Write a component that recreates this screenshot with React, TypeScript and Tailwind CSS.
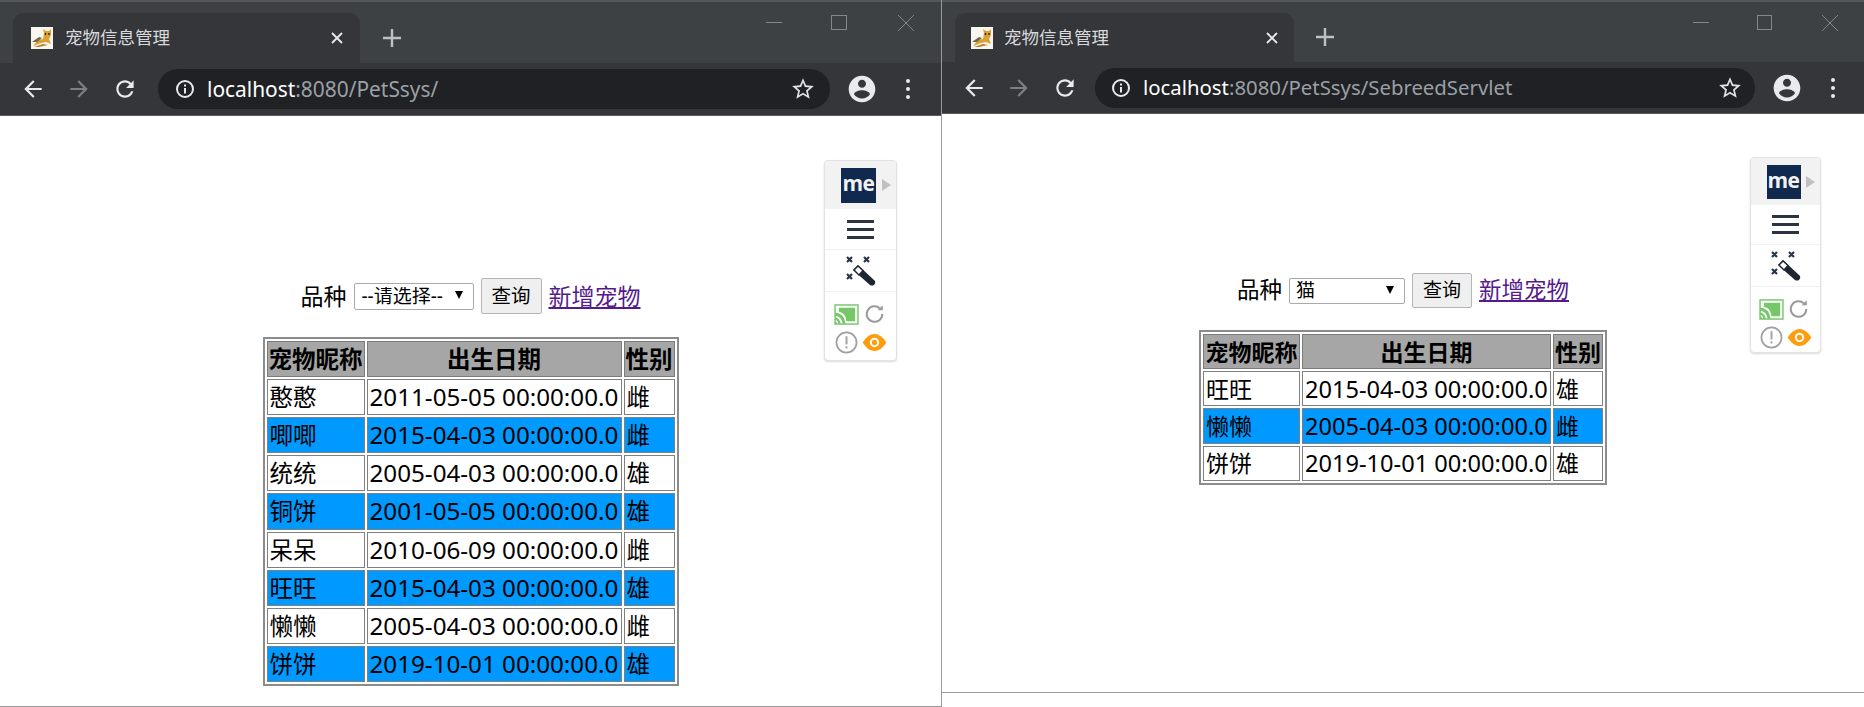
const font = 'font-["Noto_Sans","Noto_Sans_CJK_SC",sans-serif]';

const leftPets = [
  ['憨憨', '2011-05-05 00:00:00.0', '雌'],
  ['唧唧', '2015-04-03 00:00:00.0', '雌'],
  ['统统', '2005-04-03 00:00:00.0', '雄'],
  ['铜饼', '2001-05-05 00:00:00.0', '雄'],
  ['呆呆', '2010-06-09 00:00:00.0', '雌'],
  ['旺旺', '2015-04-03 00:00:00.0', '雄'],
  ['懒懒', '2005-04-03 00:00:00.0', '雌'],
  ['饼饼', '2019-10-01 00:00:00.0', '雄'],
];

const rightPets = [
  ['旺旺', '2015-04-03 00:00:00.0', '雄'],
  ['懒懒', '2005-04-03 00:00:00.0', '雌'],
  ['饼饼', '2019-10-01 00:00:00.0', '雄'],
];

function TomcatIcon() {
  return (
    <svg viewBox="0 0 22 22" className="w-[22px] h-[22px] shrink-0 bg-[#f8f6ee]">
      <path d="M2 19 L7 13 L12 12 L13 6 L12 2 L15 4 L18 4 L20 2 L20 8 L18 12 L20 17 L15 15 L10 16 L5 18 Z" fill="#e0a030" />
      <path d="M1 15 L8 10 L11 11 L6 15 Z" fill="#6b6a55" />
      <path d="M3 20 L12 17 L17 18 L8 20 Z" fill="#b5802a" />
      <circle cx="14.5" cy="7" r="0.9" fill="#222" />
      <circle cx="18" cy="7" r="0.9" fill="#222" />
    </svg>
  );
}

function Glyph({ d, className }: { d: string; className: string }) {
  return (
    <svg viewBox="0 0 24 24" fill="currentColor" className={className}>
      <path d={d} />
    </svg>
  );
}

const backPath = 'M20 11H7.83l5.59-5.59L12 4l-8 8 8 8 1.41-1.41L7.83 13H20v-2z';
const forwardPath = 'M4 11h12.17l-5.59-5.59L12 4l8 8-8 8-1.41-1.41L16.17 13H4v-2z';
const reloadPath =
  'M17.65 6.35C16.2 4.9 14.21 4 12 4c-4.42 0-7.99 3.58-7.99 8s3.57 8 7.99 8c3.73 0 6.84-2.55 7.73-6h-2.08c-.82 2.33-3.04 4-5.65 4-3.31 0-6-2.69-6-6s2.69-6 6-6c1.66 0 3.14.69 4.22 1.78L13 11h7V4l-2.35 2.35z';
const starPath =
  'M22 9.24l-7.19-.62L12 2 9.19 8.63 2 9.24l5.46 4.73L5.82 21 12 17.27 18.18 21l-1.63-7.03L22 9.24zM12 15.4l-3.76 2.27 1-4.28-3.32-2.88 4.38-.38L12 6.1l1.71 4.04 4.38.38-3.32 2.88 1 4.28L12 15.4z';
const avatarPath =
  'M12 2C6.48 2 2 6.48 2 12s4.48 10 10 10 10-4.48 10-10S17.52 2 12 2zm0 3c1.66 0 3 1.34 3 3s-1.34 3-3 3-3-1.34-3-3 1.34-3 3-3zm0 14.2c-2.5 0-4.71-1.28-6-3.22.03-1.99 4-3.08 6-3.08 1.99 0 5.97 1.09 6 3.08-1.29 1.94-3.5 3.22-6 3.22z';

function InfoIcon() {
  return (
    <svg viewBox="0 0 20 20" className="w-[20px] h-[20px] shrink-0 text-[#e8eaed]" fill="none" stroke="currentColor">
      <circle cx="10" cy="10" r="8" strokeWidth="2" />
      <rect x="9" y="9" width="2" height="5.5" fill="currentColor" stroke="none" />
      <rect x="9" y="5.5" width="2" height="2" fill="currentColor" stroke="none" />
    </svg>
  );
}

function Wand() {
  return (
    <svg viewBox="0 0 32 32" className="w-[32px] h-[32px]">
      <path d="M8 15 L13 10 L30 26 Q31 28 29 30 Q27 31 25 30 Z" fill="#1c2530" />
      <path d="M9 15 L13 11 L18 15.5 L14 20 Z" fill="#ffffff" stroke="#1c2530" strokeWidth="1.4" />
      <path d="M2 2 L7 7 M7 2 L2 7 M19 2 L24 7 M24 2 L19 7 M2 19 L7 24 M7 19 L2 24" stroke="#26364a" strokeWidth="2.2" />
    </svg>
  );
}

function CastIcon() {
  return (
    <svg viewBox="0 0 26 22" className="w-[25px] h-[21px]">
      <rect x="1" y="1" width="24" height="20" fill="#ffffff" stroke="#7ccb72" strokeWidth="1.6" />
      <path d="M5 4 H22 V18 H13 Q12 9 5 8 Z" fill="#74c868" />
      <path d="M1 9 Q11 10 12 21 H9 Q8 13 1 12 Z M1 14 Q6 15 7 21 H4.5 Q4 17 1 16.5 Z M1 18 Q3 18.5 3.5 21 H1 Z" fill="#74c868" />
    </svg>
  );
}

function ReloadSmall() {
  return (
    <svg viewBox="0 0 24 24" className="w-[22px] h-[22px]" fill="none" stroke="#9a9a9a" strokeWidth="2.2">
      <path d="M20 12a8.5 8.5 0 1 1-2.6-6.1" />
      <path d="M20.5 2.5 V8 H15 Z" fill="#9a9a9a" stroke="none" />
    </svg>
  );
}

function AlertIcon() {
  return (
    <svg viewBox="0 0 24 24" className="w-[23px] h-[23px]">
      <circle cx="12" cy="12" r="10.5" fill="none" stroke="#a0a0a0" strokeWidth="1.8" />
      <rect x="11" y="5.5" width="2" height="8.5" fill="#a0a0a0" />
      <rect x="11" y="16" width="2" height="2.2" fill="#a0a0a0" />
    </svg>
  );
}

function EyeIcon() {
  return (
    <svg viewBox="0 0 26 18" className="w-[25px] h-[17px]">
      <path d="M0.5 9 Q6 0 13 0 Q20 0 25.5 9 Q20 18 13 18 Q6 18 0.5 9 Z" fill="#ff9c0a" />
      <circle cx="13" cy="9" r="5" fill="#ffffff" />
      <circle cx="13" cy="9" r="2.8" fill="#ff9c0a" />
    </svg>
  );
}

function ExtensionPanel({ className, topClass, menuClass, wandClass, logoClass }: { className: string; topClass: string; menuClass: string; wandClass: string; logoClass: string }) {
  return (
    <div className={`absolute flex flex-col bg-white rounded-[4px] border border-[#e2e2e2] shadow-[0_1px_2px_rgba(0,0,0,0.15)] overflow-hidden ${className}`}>
      <div className={`relative flex items-center justify-center bg-[#f2f2f2] pr-[4px] ${topClass}`}>
        <div className={`flex items-center justify-center bg-[#0f2a4e] text-[#f2f2f2] font-bold text-[21px] tracking-[-0.5px] leading-none pb-[3px] font-["Open_Sans",sans-serif] ${logoClass}`}>
          me
        </div>
        <div className="absolute right-[5px] top-[18px] w-0 h-0 border-y-[6px] border-y-transparent border-l-[9px] border-l-[#c0c0c0]" />
      </div>
      <div className={`flex flex-col items-center justify-center gap-[5px] border-b border-[#f0f0f0] ${menuClass}`}>
        <div className="w-[27px] h-[3px] bg-[#2b3440]" />
        <div className="w-[27px] h-[3px] bg-[#2b3440]" />
        <div className="w-[27px] h-[3px] bg-[#2b3440]" />
      </div>
      <div className={`flex items-center justify-center border-b border-[#f0f0f0] ${wandClass}`}>
        <Wand />
      </div>
      <div className="grid grid-cols-2 justify-items-center items-center gap-y-[6px] px-[7px] pt-[11px]">
        <CastIcon />
        <ReloadSmall />
        <AlertIcon />
        <EyeIcon />
      </div>
    </div>
  );
}

function PetTable({ pets, tableClass, cellClass, textClass, dateClass, col1, col2, col3 }: { pets: string[][]; tableClass: string; cellClass: string; textClass: string; dateClass: string; col1: string; col2: string; col3: string }) {
  const th = `border border-[#7b7b7b] bg-[#a6a6a6] text-black font-bold text-center p-0 ${cellClass} ${textClass}`;
  return (
    <table className={`mx-auto table-fixed border-separate border-spacing-[2px] border-2 border-[#8c8c8c] ${tableClass}`}>
      <thead>
        <tr>
          <th className={`${th} ${col1}`}>宠物昵称</th>
          <th className={`${th} ${col2}`}>出生日期</th>
          <th className={`${th} ${col3}`}>性别</th>
        </tr>
      </thead>
      <tbody>
        {pets.map((pet, i) => (
          <tr key={pet[0]}>
            {pet.map((text, j) => (
              <td
                key={text}
                className={`border border-[#808080] text-black text-left py-0 px-[2px] whitespace-nowrap overflow-hidden ${cellClass} ${
                  j === 1 ? dateClass : textClass
                } ${i % 2 === 1 ? 'bg-[#0099ff]' : 'bg-white'}`}
              >
                {text}
              </td>
            ))}
          </tr>
        ))}
      </tbody>
    </table>
  );
}

function FilterBar({ value, barClass, selectClass, buttonClass, textClass, selectWrap }: { value: string; barClass: string; selectClass: string; buttonClass: string; textClass: string; selectWrap: string }) {
  return (
    <div className={`flex justify-center items-center text-black ${barClass} ${textClass}`}>
      <span>品种</span>
      <div className={`relative ${selectWrap}`}>
        <select
          defaultValue={value}
          className={`appearance-none w-full bg-white border border-[#a9a9a9] rounded-[2px] text-black outline-none ${selectClass}`}
        >
          <option>{value}</option>
        </select>
        <span className="absolute right-[11px] top-[8px] w-0 h-0 border-x-[4px] border-x-transparent border-t-[8px] border-t-black" />
      </div>
      <button className={`bg-[#efefef] border border-[#b5b5b5] rounded-[2px] text-black ${buttonClass}`}>查询</button>
      <a href="#" className="text-[#551a8b] underline">新增宠物</a>
    </div>
  );
}

function Chrome({ url, host, barClass }: { url: string; host: string; barClass: { bar: string; strip: string; tab: string; tabTitle: string; plus: string; min: string; max: string; tool: string; fwd: string; reload: string; omni: string; text: string; avatar: string } }) {
  const c = barClass;
  return (
    <div className={`flex flex-col shrink-0 border-b border-[#5a5b5e] ${font} ${c.bar}`}>
      <div className={`flex bg-[#3e4144] border-t-2 border-[#55585b] ${c.strip}`}>
        <div className={`flex items-center bg-[#35363a] rounded-t-[10px] ${c.tab}`}>
          <TomcatIcon />
          <span className={`text-[#d7d9dc] text-[17.5px] leading-none ${c.tabTitle}`}>宠物信息管理</span>
          <svg viewBox="0 0 12 12" className="w-[12px] h-[12px] ml-auto" stroke="#e8eaed" strokeWidth="1.8">
            <path d="M1 1 L11 11 M11 1 L1 11" />
          </svg>
        </div>
        <svg viewBox="0 0 18 18" className={`w-[18px] h-[18px] self-center ${c.plus}`} stroke="#bdc1c6" strokeWidth="2.4">
          <path d="M9 0 V18 M0 9 H18" />
        </svg>
        <div className="ml-auto flex items-start">
          <div className={`h-[1px] bg-[#85888b] mt-[20px] w-[16px] ${c.min}`} />
          <div className={`h-[15px] border border-[#85888b] mt-[13px] ${c.max}`} />
          <svg viewBox="0 0 16 16" className="w-[16px] h-[16px] mt-[13px]" stroke="#85888b" strokeWidth="1">
            <path d="M0 0 L16 16 M16 0 L0 16" />
          </svg>
        </div>
      </div>
      <div className={`flex items-center bg-[#35363a] text-[#e8eaed] ${c.tool}`}>
        <Glyph d={backPath} className="w-[26px] h-[26px] shrink-0" />
        <Glyph d={forwardPath} className={`w-[26px] h-[26px] shrink-0 text-[#7d7f82] ${c.fwd}`} />
        <Glyph d={reloadPath} className={`w-[26px] h-[26px] shrink-0 ${c.reload}`} />
        <div className={`flex items-center bg-[#202124] rounded-full shrink-0 ${c.omni}`}>
          <InfoIcon />
          <span className={`ml-[12px] leading-none whitespace-nowrap text-[#9aa0a6] ${c.text}`}>
            <span className="text-white">{host}</span>
            {url}
          </span>
          <Glyph d={starPath} className="w-[26px] h-[26px] ml-auto text-[#dfe1e5] shrink-0" />
        </div>
        <Glyph d={avatarPath} className={`w-[32px] h-[32px] shrink-0 ${c.avatar}`} />
        <div className="flex flex-col gap-[4px] ml-[28px]">
          <div className="w-[4px] h-[4px] rounded-full bg-[#e8eaed]" />
          <div className="w-[4px] h-[4px] rounded-full bg-[#e8eaed]" />
          <div className="w-[4px] h-[4px] rounded-full bg-[#e8eaed]" />
        </div>
      </div>
    </div>
  );
}

export default function App() {
  return (
    <div className={`flex items-start w-[1864px] h-[707px] overflow-hidden bg-white ${font}`}>
      {/* left window */}
      <div className="relative flex flex-col w-[942px] h-[707px] shrink-0 border-r border-b border-[#9a9a9a] overflow-hidden">
        <Chrome
          host="localhost"
          url=":8080/PetSsys/"
          barClass={{
            bar: 'h-[116px]',
            strip: 'h-[63px] pl-[13px] pr-[27px]',
            tab: 'w-[347px] mt-[11px] pl-[18px] pr-[17px]',
            tabTitle: 'ml-[12px]',
            plus: 'ml-[23px] mt-[10px]',
            min: 'mr-[49px]',
            max: 'w-[16px] mr-[51px]',
            tool: 'h-[52px] pl-[20px]',
            fwd: 'ml-[20px]',
            reload: 'ml-[20px]',
            omni: 'w-[672px] h-[40px] ml-[20px] pl-[17px] pr-[14px]',
            text: 'text-[20.9px]',
            avatar: 'ml-[16px]',
          }}
        />
        <div className="pt-[162px]">
          <FilterBar
            value="--请选择--"
            barClass="h-[36px] gap-[7px]"
            textClass="text-[23px] leading-none"
            selectWrap="w-[120px]"
            selectClass="h-[27px] pl-[7px] text-[19px] leading-none"
            buttonClass="w-[61px] h-[36px] text-[19.5px]"
          />
          <div className="mt-[23px]">
            <PetTable
              pets={leftPets}
              tableClass="w-[416px] h-[349px]"
              cellClass="h-[36px] leading-[30px]"
              textClass="text-[23.5px]"
              dateClass="text-[24.2px]"
              col1="w-[98px]"
              col2="w-[255px]"
              col3="w-[51px]"
            />
          </div>
        </div>
        <ExtensionPanel
          className="left-[824px] top-[160px] w-[73px] h-[201px]"
          topClass="h-[48px]"
          menuClass="h-[41px]"
          wandClass="h-[42px]"
          logoClass="w-[35px] h-[35px]"
        />
      </div>

      {/* right window */}
      <div className="relative flex flex-col flex-1 h-[693px] border-b border-[#9a9a9a] overflow-hidden">
        <Chrome
          host="localhost"
          url=":8080/PetSsys/SebreedServlet"
          barClass={{
            bar: 'h-[114px]',
            strip: 'h-[62px] pl-[13px] pr-[26px]',
            tab: 'w-[339px] mt-[11px] pl-[16px] pr-[16px]',
            tabTitle: 'ml-[11px]',
            plus: 'ml-[22px] mt-[10px]',
            min: 'mr-[48px]',
            max: 'w-[15px] mr-[50px]',
            tool: 'h-[51px] pl-[19px]',
            fwd: 'ml-[19px]',
            reload: 'ml-[20px]',
            omni: 'w-[660px] h-[40px] ml-[17px] pl-[16px] pr-[12px]',
            text: 'text-[20.35px]',
            avatar: 'ml-[16px]',
          }}
        />
        <div className="pt-[159px]">
          <FilterBar
            value="猫"
            barClass="h-[35px] gap-[7px]"
            textClass="text-[22.5px] leading-none"
            selectWrap="w-[116px]"
            selectClass="h-[26px] pl-[6px] text-[19px] leading-none"
            buttonClass="w-[60px] h-[35px] text-[19px]"
          />
          <div className="mt-[22px]">
            <PetTable
              pets={rightPets}
              tableClass="w-[408px] h-[155px]"
              cellClass="h-[35px] leading-[30px]"
              textClass="text-[23px]"
              dateClass="text-[23.6px]"
              col1="w-[97px]"
              col2="w-[249px]"
              col3="w-[50px]"
            />
          </div>
        </div>
        <ExtensionPanel
          className="left-[808px] top-[157px] w-[71px] h-[196px]"
          topClass="h-[47px]"
          menuClass="h-[40px]"
          wandClass="h-[42px]"
          logoClass="w-[34px] h-[34px]"
        />
      </div>
    </div>
  );
}
